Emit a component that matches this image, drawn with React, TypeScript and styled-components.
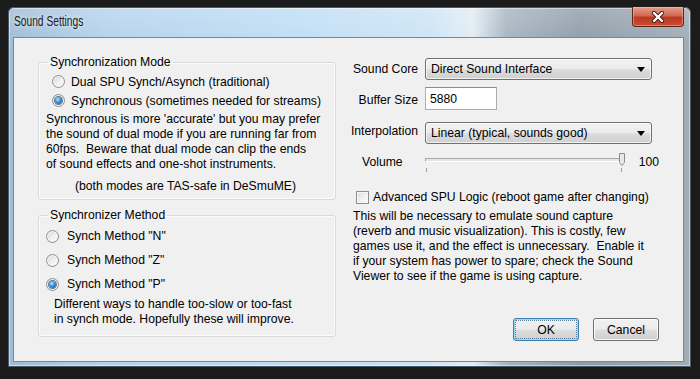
import React from 'react';
import styled, { createGlobalStyle, css } from 'styled-components';

const GlobalStyle = createGlobalStyle`
  html, body {
    margin: 0;
    padding: 0;
    background: #1b1b1b;
  }
  body {
    font-family: "Liberation Sans", Arial, sans-serif;
    font-size: 12.2px;
    color: #000;
  }
`;

const Screen = styled.div`
  width: 700px;
  height: 379px;
  box-sizing: border-box;
  padding: 7px 9px 12px 8px;
  background: #1b1b1b;
  display: flex;
`;

const Window = styled.div`
  flex: 1;
  display: flex;
  flex-direction: column;
  box-sizing: border-box;
  padding: 0 7px 5px 5px;
  border-radius: 6px 6px 0 0;
  background:
    linear-gradient(180deg, rgba(255, 255, 255, 0.2) 0%, rgba(255, 255, 255, 0) 40px),
    linear-gradient(
      90deg,
      #9ebcd6 0%,
      #b4d2ec 14%,
      #bedcf4 40%,
      #cce4f6 62%,
      #e2edf4 68%,
      #a6b4c0 73%,
      #8e9ca8 84%,
      #a0acb6 100%
    );
  box-shadow: inset 0 0 0 1px #4a5866, inset 0 0 0 2px rgba(255, 255, 255, 0.45);
`;

const TitleBar = styled.div`
  height: 30px;
  display: flex;
  align-items: flex-start;
`;

const Title = styled.span`
  margin: 6px 0 0 1px;
  line-height: 16px;
  font-size: 14px;
  color: #1a1a1a;
  transform: scaleX(0.73);
  transform-origin: left center;
  text-shadow: 0 0 6px rgba(255, 255, 255, 0.9);
`;

const CloseButton = styled.div`
  margin-left: auto;
  width: 52px;
  height: 20px;
  box-sizing: border-box;
  display: flex;
  align-items: center;
  justify-content: center;
  border: 1px solid #5e241a;
  border-top: none;
  border-radius: 0 0 4px 4px;
  background: linear-gradient(180deg, #e4a08e 0%, #d06a52 45%, #bd3a22 55%, #c84c30 100%);
  box-shadow: inset 0 0 0 1px rgba(255, 200, 180, 0.45);
`;

const Client = styled.div`
  flex: 1;
  box-sizing: border-box;
  background: #f0f0f0;
  border: 1px solid #7a8692;
  display: grid;
  grid-template-columns: 298px 311px;
  column-gap: 12px;
  padding: 17px 24px 20px 24px;
`;

const LeftColumn = styled.div`
  display: flex;
  flex-direction: column;
  gap: 8px;
`;

const GroupBox = styled.fieldset<{ $pad: string }>`
  margin: 0;
  padding: ${(p) => p.$pad};
  border: 1px solid #d5dbe0;
  border-radius: 3px;
  box-shadow: inset 0 0 0 1px #fbfbfb;
  min-width: 0;
  display: flex;
  flex-direction: column;
`;

const Legend = styled.legend`
  margin-left: 2px;
  padding: 0 2px;
  line-height: 15px;
`;

const RadioRow = styled.div<{ $height: number; $indent: number; $gap: number }>`
  height: ${(p) => p.$height}px;
  display: flex;
  align-items: center;
  gap: ${(p) => p.$gap}px;
  padding-left: ${(p) => p.$indent}px;
  white-space: nowrap;
`;

const RadioCircle = styled.span<{ $checked?: boolean }>`
  width: 13px;
  height: 13px;
  box-sizing: border-box;
  border-radius: 50%;
  border: 1px solid #8e8f8f;
  background: linear-gradient(135deg, #d6d6d6 0%, #f0f0f0 55%, #ffffff 100%);
  box-shadow: inset 0 0 0 1px #f4f4f4;
  flex-shrink: 0;
  display: flex;
  align-items: center;
  justify-content: center;
  ${(p) =>
    p.$checked &&
    css`
      &::after {
        content: '';
        width: 7px;
        height: 7px;
        border-radius: 50%;
        background: radial-gradient(circle at 40% 35%, #bfe6ff 0%, #3c8fd6 45%, #14457a 100%);
        box-shadow: 0 0 0 1px #5c7a96;
      }
    `}
`;

const Text = styled.div<{ $indent?: number; $top?: number; $center?: boolean }>`
  line-height: 15px;
  white-space: pre;
  padding-left: ${(p) => p.$indent ?? 0}px;
  margin-top: ${(p) => p.$top ?? 0}px;
  text-align: ${(p) => (p.$center ? 'center' : 'left')};
`;

const RightColumn = styled.div`
  display: flex;
  flex-direction: column;
  padding-top: 3px;
`;

const FieldRow = styled.div<{ $height: number; $top: number }>`
  height: ${(p) => p.$height}px;
  margin-top: ${(p) => p.$top}px;
  display: flex;
  align-items: center;
  gap: 7px;
`;

const FieldLabel = styled.span<{ $shift?: number }>`
  width: 70px;
  text-align: right;
  white-space: nowrap;
  margin-top: ${(p) => p.$shift ?? 0}px;
`;

const Combo = styled.div`
  width: 227px;
  height: 22px;
  box-sizing: border-box;
  border: 1px solid #707070;
  border-radius: 3px;
  background: linear-gradient(180deg, #f2f2f2 0%, #ebebeb 48%, #dddddd 52%, #cfcfcf 100%);
  box-shadow: inset 0 0 0 1px rgba(255, 255, 255, 0.7);
  display: flex;
  align-items: center;
  padding: 0 6px 0 5px;
  white-space: nowrap;
`;

const ComboArrow = styled.svg`
  margin-left: auto;
`;

const TextBox = styled.div`
  width: 72px;
  height: 23px;
  box-sizing: border-box;
  border: 1px solid #abadb3;
  border-top-color: #8a8c92;
  background: #fff;
  display: flex;
  align-items: center;
  padding-left: 4px;
`;

const VolumeLabel = styled.span`
  width: 58px;
  padding-left: 14px;
`;

const Slider = styled.div`
  width: 212px;
  height: 24px;
  display: flex;
  flex-direction: column;
  position: relative;
`;

const Track = styled.div`
  margin: 8px 3px 0 1px;
  height: 2px;
  border: 1px solid;
  border-color: #a8a8a8 #e4e4e4 #ffffff #a8a8a8;
  background: #e6e6e6;
`;

const Thumb = styled.svg`
  position: absolute;
  right: 0;
  top: 3px;
`;

const Ticks = styled.div`
  margin-top: 6px;
  padding: 0 3px 0 2px;
  display: flex;
  justify-content: space-between;
`;

const Tick = styled.span`
  width: 1px;
  height: 4px;
  background: #9a9a9a;
`;

const VolumeValue = styled.span`
  margin-left: 7px;
`;

const CheckRow = styled.div`
  height: 16px;
  margin-top: 15px;
  padding-left: 8px;
  display: flex;
  align-items: center;
  gap: 4px;
  white-space: nowrap;
`;

const CheckBox = styled.span`
  width: 13px;
  height: 13px;
  box-sizing: border-box;
  border: 1px solid #8f8f8f;
  background: linear-gradient(135deg, #dcdcdc 0%, #f2f2f2 60%, #fdfdfd 100%);
  box-shadow: inset 0 0 0 1px #f6f6f6;
`;

const ButtonRow = styled.div`
  margin-top: auto;
  display: flex;
  justify-content: flex-end;
  gap: 14px;
`;

const Button = styled.div<{ $default?: boolean }>`
  width: 66px;
  height: 23px;
  box-sizing: border-box;
  border: 1px solid #707070;
  border-radius: 3px;
  background: linear-gradient(180deg, #f2f2f2 0%, #ebebeb 48%, #dddddd 52%, #cfcfcf 100%);
  box-shadow: inset 0 0 0 1px rgba(255, 255, 255, 0.8);
  display: flex;
  align-items: center;
  justify-content: center;
  ${(p) =>
    p.$default &&
    css`
      border-color: #3c7fb1;
      box-shadow: inset 0 0 0 1px #9fd8f6;
      outline: 1px dotted #5a7e9a;
      outline-offset: -3px;
    `}
`;

const radiosMode = [
  { label: 'Dual SPU Synch/Asynch (traditional)', checked: false },
  { label: 'Synchronous (sometimes needed for streams)', checked: true },
];

const radiosMethod = [
  { label: 'Synch Method "N"', checked: false },
  { label: 'Synch Method "Z"', checked: false },
  { label: 'Synch Method "P"', checked: true },
];

const Arrow = () => (
  <ComboArrow width="8" height="5" viewBox="0 0 8 5">
    <path d="M0 0H8L4 5Z" fill="#000" />
  </ComboArrow>
);

export default function App() {
  return (
    <>
      <GlobalStyle />
      <Screen>
        <Window>
          <TitleBar>
            <Title>Sound Settings</Title>
            <CloseButton>
              <svg width="14" height="12" viewBox="0 0 14 12">
                <path d="M3 2L11 10M11 2L3 10" stroke="#4a1a12" strokeWidth="4.2" strokeLinecap="round" />
                <path d="M3 2L11 10M11 2L3 10" stroke="#ffffff" strokeWidth="2.4" strokeLinecap="round" />
              </svg>
            </CloseButton>
          </TitleBar>
          <Client>
            <LeftColumn>
              <GroupBox $pad="2px 10px 5px 7px">
                <Legend>Synchronization Mode</Legend>
                {radiosMode.map((r) => (
                  <RadioRow key={r.label} $height={19} $indent={6} $gap={6}>
                    <RadioCircle $checked={r.checked} />
                    {r.label}
                  </RadioRow>
                ))}
                <Text $top={2}>
                  {"Synchronous is more 'accurate' but you may prefer\n" +
                    'the sound of dual mode if you are running far from\n' +
                    '60fps.  Beware that dual mode can clip the ends\n' +
                    'of sound effects and one-shot instruments.'}
                </Text>
                <Text $top={7} $center>
                  (both modes are TAS-safe in DeSmuME)
                </Text>
              </GroupBox>
              <GroupBox $pad="1px 10px 9px 7px">
                <Legend>Synchronizer Method</Legend>
                {radiosMethod.map((r) => (
                  <RadioRow key={r.label} $height={24} $indent={0} $gap={8}>
                    <RadioCircle $checked={r.checked} />
                    {r.label}
                  </RadioRow>
                ))}
                <Text $top={1} $indent={8}>
                  {'Different ways to handle too-slow or too-fast\n' +
                    'in synch mode. Hopefully these will improve.'}
                </Text>
              </GroupBox>
            </LeftColumn>
            <RightColumn>
              <FieldRow $height={22} $top={0}>
                <FieldLabel>Sound Core</FieldLabel>
                <Combo>
                  Direct Sound Interface
                  <Arrow />
                </Combo>
              </FieldRow>
              <FieldRow $height={23} $top={7}>
                <FieldLabel $shift={2}>Buffer Size</FieldLabel>
                <TextBox>5880</TextBox>
              </FieldRow>
              <FieldRow $height={22} $top={12}>
                <FieldLabel $shift={-4}>Interpolation</FieldLabel>
                <Combo>
                  Linear (typical, sounds good)
                  <Arrow />
                </Combo>
              </FieldRow>
              <FieldRow $height={24} $top={6}>
                <VolumeLabel>Volume</VolumeLabel>
                <Slider>
                  <Track />
                  <Thumb width="6" height="13" viewBox="0 0 6 13">
                    <path d="M0.5 0.5H5.5V9.5L3 12.5L0.5 9.5Z" fill="#e9e9e9" stroke="#8c8c8c" />
                  </Thumb>
                  <Ticks>
                    <Tick />
                    <Tick />
                  </Ticks>
                </Slider>
                <VolumeValue>100</VolumeValue>
              </FieldRow>
              <CheckRow>
                <CheckBox />
                Advanced SPU Logic (reboot game after changing)
              </CheckRow>
              <Text $top={4} $indent={5}>
                {'This will be necessary to emulate sound capture\n' +
                  '(reverb and music visualization). This is costly, few\n' +
                  'games use it, and the effect is unnecessary.  Enable it\n' +
                  'if your system has power to spare; check the Sound\n' +
                  'Viewer to see if the game is using capture.'}
              </Text>
              <ButtonRow>
                <Button $default>OK</Button>
                <Button>Cancel</Button>
              </ButtonRow>
            </RightColumn>
          </Client>
        </Window>
      </Screen>
    </>
  );
}
